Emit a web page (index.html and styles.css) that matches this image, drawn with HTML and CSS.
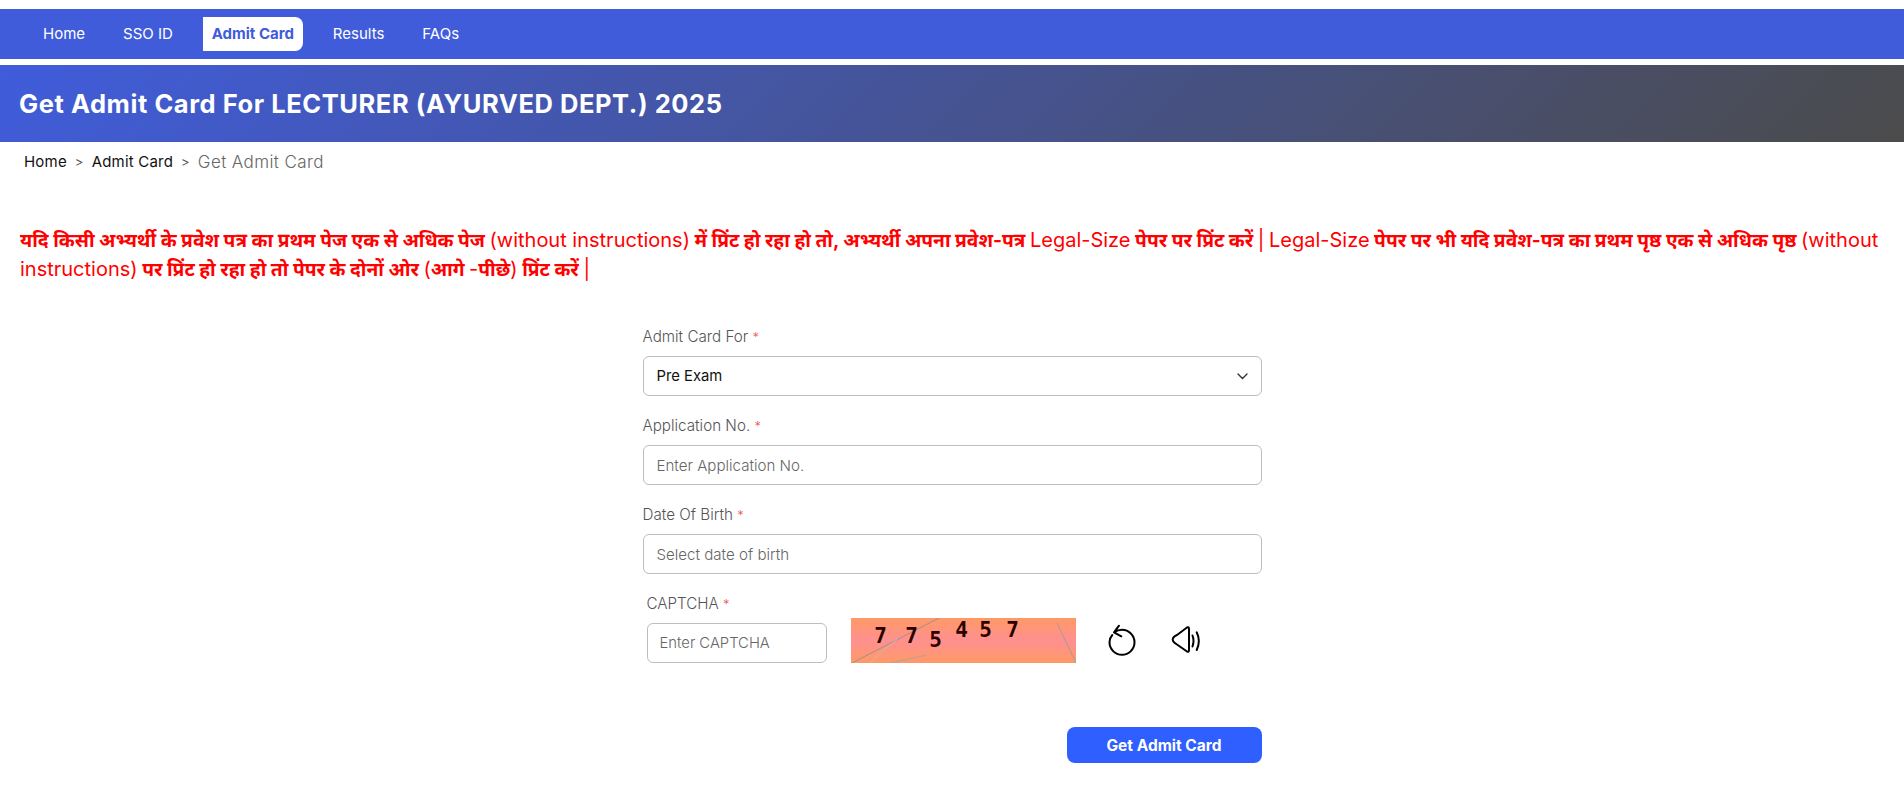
FILE: index.html
```html
<!DOCTYPE html>
<html lang="en">
<head>
<meta charset="utf-8">
<title>Get Admit Card</title>
<link rel="stylesheet" href="styles.css">
</head>
<body>
<nav class="nav">
  <a class="nav-link">Home</a>
  <a class="nav-link">SSO ID</a>
  <a class="nav-link active">Admit Card</a>
  <a class="nav-link">Results</a>
  <a class="nav-link">FAQs</a>
</nav>
<header class="banner"><h1>Get Admit Card For LECTURER (AYURVED DEPT.) 2025</h1></header>
<div class="crumbs">
  <a>Home</a><span class="sep">&gt;</span><a>Admit Card</a><span class="sep">&gt;</span><span class="current">Get Admit Card</span>
</div>
<p class="notice">यदि किसी अभ्यर्थी के प्रवेश पत्र का प्रथम पेज एक से अधिक पेज <span class="latin">(without instructions)</span> में प्रिंट हो रहा हो तो, अभ्यर्थी अपना प्रवेश-पत्र <span class="latin">Legal-Size</span> पेपर पर प्रिंट करें <span class="latin">|</span> <span class="latin">Legal-Size</span> पेपर पर भी यदि प्रवेश-पत्र का प्रथम पृष्ठ एक से अधिक पृष्ठ <span class="latin">(without instructions)</span> पर प्रिंट हो रहा हो तो पेपर के दोनों ओर <span class="latin">(</span>आगे <span class="latin">-</span>पीछे<span class="latin">)</span> प्रिंट करें <span class="latin">|</span></p>
<form class="form">
  <div class="field">
    <label>Admit Card For <i>*</i></label>
    <div class="box select"><span>Pre Exam</span>
      <svg class="chev" width="11" height="7" viewBox="0 0 11 7"><path d="M1 1l4.500 4.500L10 1" fill="none" stroke="#333" stroke-width="1.400" stroke-linecap="round"/></svg>
    </div>
  </div>
  <div class="field">
    <label>Application No. <i>*</i></label>
    <div class="box ph">Enter Application No.</div>
  </div>
  <div class="field">
    <label>Date Of Birth <i>*</i></label>
    <div class="box ph">Select date of birth</div>
  </div>
  <div class="captcha-field">
    <label>CAPTCHA <i>*</i></label>
    <div class="captcha-row">
      <div class="box ph captcha-input">Enter CAPTCHA</div>
      <div class="captcha-img">
        <svg class="noise" width="225" height="45" viewBox="0 0 225 45">
          <path d="M1 45L88 0" stroke="#a09088" fill="none"/>
          <path d="M19 45L47 20" stroke="#c8b8b0" fill="none"/>
          <path d="M39 45L76 37" stroke="#b8a298" fill="none"/>
          <path d="M206 5L225 45" stroke="#a89a98" fill="none"/>
        </svg>
        <span class="dg d1">7</span><span class="dg d2">7</span><span class="dg d3">5</span><span class="dg d4">4</span><span class="dg d5">5</span><span class="dg d6">7</span>
      </div>
      <svg class="refresh" width="28" height="32" viewBox="0 0 28 32"><path d="M11 1.700L6 8.300l7.300 4M6 8.300C8.500 6.800 11 5.800 14 5.800a12.500 12.500 0 1 1-12.500 12.500c0-2.800 1-5.300 2.800-7.300" fill="none" stroke="#000" stroke-width="2" stroke-linecap="round" stroke-linejoin="round"/></svg>
      <svg class="speaker" width="32" height="32" viewBox="0 0 32 32"><path d="M16 3.500L6 11Q1.700 13 1.700 15.500Q1.700 18 6 20.500L16 27.500Q18 28.500 18 26V5Q18 2.500 16 3.500z" fill="none" stroke="#000" stroke-width="2" stroke-linejoin="round"/><path d="M21.500 11.500Q23.500 16.500 21.500 22.500M25.700 8.300Q30 17 25.700 26" fill="none" stroke="#000" stroke-width="2" stroke-linecap="round"/></svg>
    </div>
  </div>
  <div class="actions"><button type="button" class="submit">Get Admit Card</button></div>
</form>
</body>
</html>
```
FILE: styles.css
```css
* { box-sizing: border-box; }
html, body { margin: 0; background: #fff; }
body { padding-top: 9px; font-family: Inter, "Noto Sans", "Liberation Sans", sans-serif; color: #222; overflow: hidden; height: 806px; }

.nav { height: 50px; background: #405cdb; display: flex; align-items: center; padding-left: 35px; }
.nav-link { color: #fff; font-size: 15px; padding: 0 8px; margin-right: 22px; line-height: 34px; height: 34px; }
.nav-link.active { background: #fff; color: #405cdb; font-weight: 700; border-radius: 0 8px 8px 0; width: 100px; text-align: center; padding: 0; }

.banner { height: 77px; margin-top: 6px; padding-left: 19px; display: flex; align-items: center; background: linear-gradient(135deg, #405cdb 0%, #4b4b4b 100%); }
.banner h1 { margin: 0; color: #fff; font-size: 25.500px; font-weight: 700; letter-spacing: .56px; }

.crumbs { padding: 9px 0 0 24px; display: flex; align-items: center; height: 30px; font-size: 15px; letter-spacing: .2px; color: #111; }
.crumbs .sep { color: #555; margin: 0 8px; font-size: 13px; }
.crumbs .current { color: #666; font-size: 17px; letter-spacing: .4px; font-weight: 300; }

.notice { margin: 54px 18px 0 20px; color: #f00; font-size: 19.200px; line-height: 29px; font-weight: 700; }
.latin { font-size: 20px; font-weight: 400; }

.form { width: 619px; margin: 43px auto 0; }
.field { height: 89px; }
label { display: block; font-size: 15.200px; line-height: 20px; color: #555; font-weight: 300; }
label i { color: #e55; font-style: normal; font-size: 13px; }
.box { height: 40px; margin-top: 9px; border: 1px solid #bdbdbd; border-radius: 6px; padding: 0 13px; display: flex; align-items: center; font-size: 15.100px; }
.select { justify-content: space-between; color: #111; font-size: 14.800px; }
.ph { color: #666; font-weight: 300; }

.captcha-field { padding-left: 4px; }
.captcha-row { display: flex; align-items: flex-end; margin-top: 4px; }
.captcha-input { width: 180px; margin-top: 0; font-size: 14.800px; padding: 0 12px; }
.captcha-img { position: relative; width: 225px; height: 45px; margin-left: 24px; background: linear-gradient(#ff9966 0%, #ff9090 50%, #ff9966 100%); overflow: hidden; }
.noise { position: absolute; left: 0; top: 0; }
.dg { position: absolute; font-family: "DejaVu Sans Mono", monospace; font-weight: 700; font-size: 21px; line-height: 20px; color: #2b0000; width: 16px; text-align: center; }
.d1 { left: 22px; top: 8px; }
.d2 { left: 53px; top: 8px; }
.d3 { left: 77px; top: 12px; }
.d4 { left: 103px; top: 2px; }
.d5 { left: 127px; top: 2px; }
.d6 { left: 154px; top: 2px; }
.refresh { margin: 0 0 7px 32px; }
.speaker { margin: 0 0 7px 35px; }

.actions { display: flex; justify-content: flex-end; margin-top: 64px; }
.submit { width: 195px; height: 36px; border: 0; border-radius: 8px; background: #2f60ff; color: #fff; font: 700 15.500px Inter, sans-serif; }
```
